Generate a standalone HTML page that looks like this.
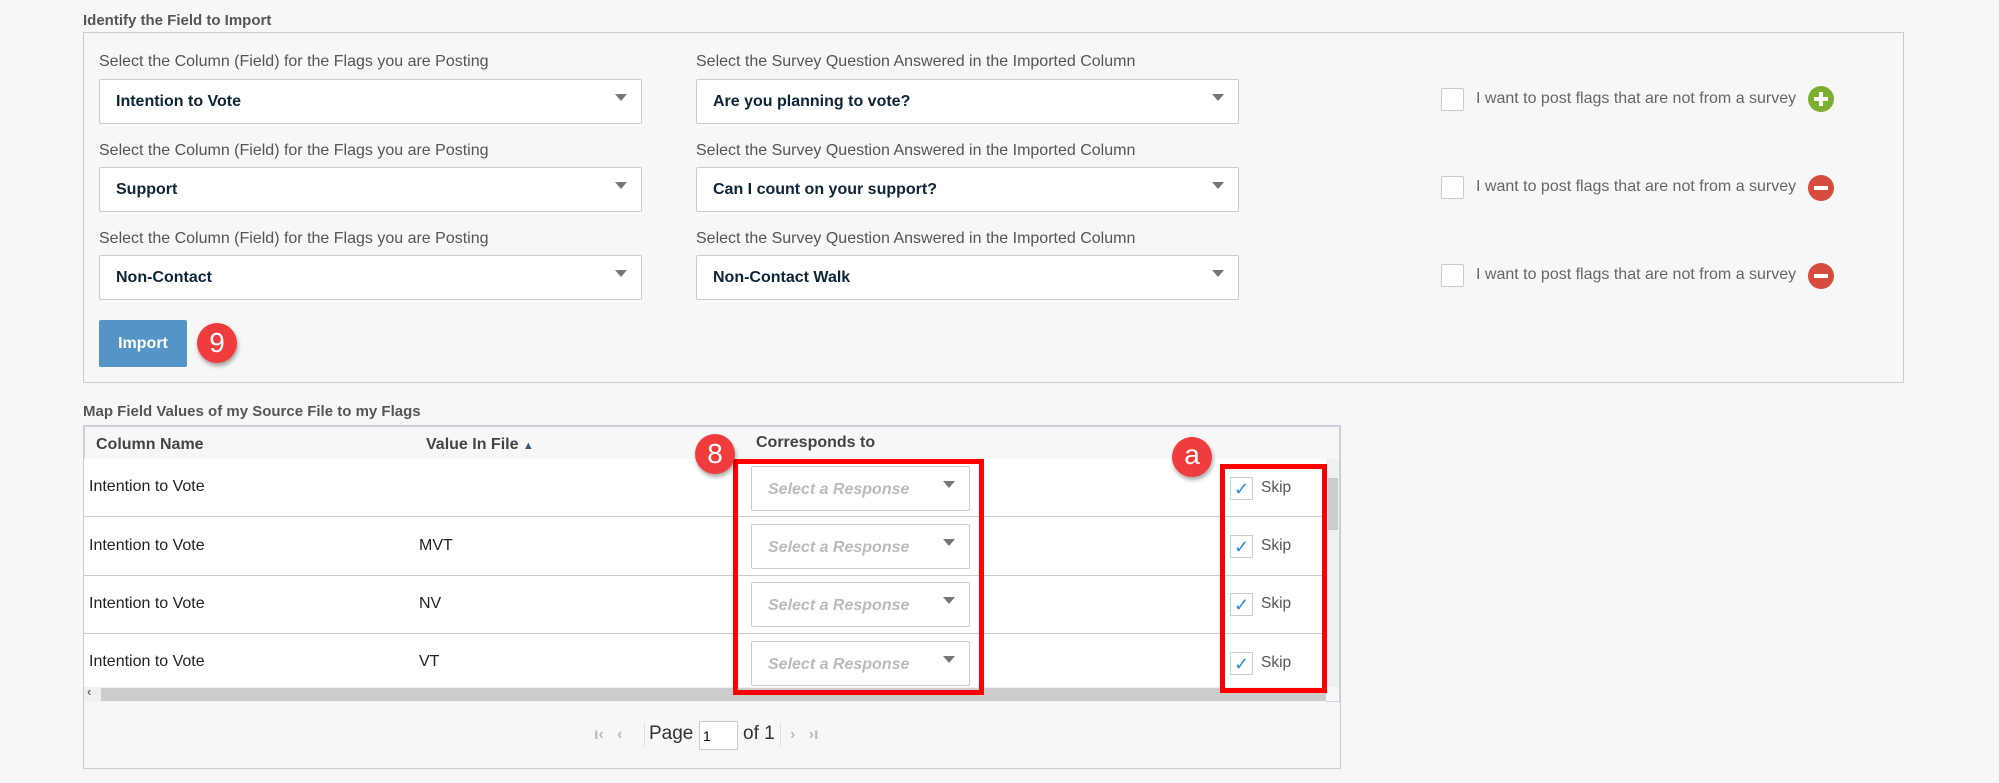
<!DOCTYPE html>
<html><head><meta charset="utf-8"><style>
body{margin:0;width:1999px;height:783px;background:#f7f7f7;font-family:"Liberation Sans",Arial,sans-serif;position:relative;overflow:hidden;color:#333}
.a{position:absolute}
.t{font-weight:bold;font-size:15px;color:#555}
.lbl{font-size:16px;color:#555}
.sel{position:absolute;background:#fff;border:1px solid #ccc;border-radius:2px;box-sizing:border-box;font-weight:bold;font-size:16px;color:#0c2536;padding-left:16px;line-height:44px}
.sel:after{content:"";position:absolute;right:14px;top:14px;border-left:6px solid transparent;border-right:6px solid transparent;border-top:7px solid #777}
.cb{position:absolute;width:23px;height:23px;background:#fff;border:1px solid #ccc;border-radius:2px;box-sizing:border-box}
.nt{font-size:16px;color:#666}
.ic{position:absolute;width:26px;height:26px;border-radius:50%}
.ic:before{content:"";position:absolute;left:6px;top:11px;width:14px;height:4px;background:#fff}
.plus:after{content:"";position:absolute;left:11px;top:6px;width:4px;height:14px;background:#fff}
.badge{position:absolute;width:40px;height:40px;border-radius:50%;background:#f03c3c;color:#fff;font-size:28px;text-align:center;line-height:40px;box-shadow:1px 3px 4px rgba(0,0,0,.35)}
.row{position:absolute;left:84px;width:1242px;background:#fff;border-bottom:1px solid #ccc}
.rt{position:absolute;font-size:16px;color:#222}
.rs{position:absolute;left:751px;width:219px;height:45px;background:#fff;border:1px solid #ccc;border-radius:2px;box-sizing:border-box;font-style:italic;font-weight:bold;color:#bbb;font-size:16px;padding-left:16px;line-height:45px}
.rs:after{content:"";position:absolute;right:14px;top:14px;border-left:6px solid transparent;border-right:6px solid transparent;border-top:7px solid #777}
.sk{position:absolute;left:1230px;width:23px;height:23px;background:#fff;border:1px solid #ccc;box-sizing:border-box;color:#2a8fd8;font-size:18px;text-align:center;line-height:22px}
.skt{position:absolute;left:1261px;font-size:15.5px;color:#555}
</style></head><body>
<div class="a t" style="left:83px;top:12px">Identify the Field to Import</div>
<div class="a" style="left:83px;top:32px;width:1821px;height:351px;border:1px solid #ccc;box-sizing:border-box"></div>

<div class="a lbl" style="left:99px;top:53px">Select the Column (Field) for the Flags you are Posting</div>
<div class="a lbl" style="left:696px;top:53px">Select the Survey Question Answered in the Imported Column</div>
<div class="sel" style="left:99px;top:79px;width:543px;height:45px">Intention to Vote</div>
<div class="sel" style="left:696px;top:79px;width:543px;height:45px">Are you planning to vote?</div>
<div class="cb" style="left:1441px;top:88px"></div><div class="a nt" style="left:1476px;top:90px">I want to post flags that are not from a survey</div>
<div class="ic plus" style="left:1808px;top:86px;background:#7cae2f"></div>

<div class="a lbl" style="left:99px;top:142px">Select the Column (Field) for the Flags you are Posting</div>
<div class="a lbl" style="left:696px;top:142px">Select the Survey Question Answered in the Imported Column</div>
<div class="sel" style="left:99px;top:167px;width:543px;height:45px">Support</div>
<div class="sel" style="left:696px;top:167px;width:543px;height:45px">Can I count on your support?</div>
<div class="cb" style="left:1441px;top:176px"></div><div class="a nt" style="left:1476px;top:178px">I want to post flags that are not from a survey</div>
<div class="ic" style="left:1808px;top:175px;background:#d54d3c"></div>

<div class="a lbl" style="left:99px;top:230px">Select the Column (Field) for the Flags you are Posting</div>
<div class="a lbl" style="left:696px;top:230px">Select the Survey Question Answered in the Imported Column</div>
<div class="sel" style="left:99px;top:255px;width:543px;height:45px">Non-Contact</div>
<div class="sel" style="left:696px;top:255px;width:543px;height:45px">Non-Contact Walk</div>
<div class="cb" style="left:1441px;top:264px"></div><div class="a nt" style="left:1476px;top:266px">I want to post flags that are not from a survey</div>
<div class="ic" style="left:1808px;top:263px;background:#d54d3c"></div>

<div class="a" style="left:99px;top:320px;width:88px;height:47px;background:#5594c6;border-radius:2px;color:#fff;font-weight:bold;font-size:16px;text-align:center;line-height:47px">Import</div>
<div class="badge" style="left:197px;top:323px">9</div>

<div class="a t" style="left:83px;top:403px">Map Field Values of my Source File to my Flags</div>
<div class="a" style="left:83px;top:425px;width:1258px;height:344px;border:1px solid #ccc;box-sizing:border-box;background:#f7f7f7"></div>
<div class="a" style="left:84px;top:426px;width:1256px;height:276px;border:1px solid #c4d6e6;box-sizing:border-box"></div>
<div class="a t" style="left:96px;top:436px;color:#444;font-size:16px">Column Name</div>
<div class="a t" style="left:426px;top:436px;color:#444;font-size:16px">Value In File <span style="font-size:11px;color:#3a5a70">&#9650;</span></div>
<div class="a t" style="left:756px;top:434px;color:#444;font-size:16px">Corresponds to</div>

<div class="row" style="top:459px;height:57px"></div>
<div class="row" style="top:517px;height:58px"></div>
<div class="row" style="top:576px;height:57px"></div>
<div class="row" style="top:634px;height:53px;border:0"></div>

<div class="rt" style="left:89px;top:478px">Intention to Vote</div>
<div class="rt" style="left:89px;top:537px">Intention to Vote</div><div class="rt" style="left:419px;top:537px">MVT</div>
<div class="rt" style="left:89px;top:595px">Intention to Vote</div><div class="rt" style="left:419px;top:595px">NV</div>
<div class="rt" style="left:89px;top:653px">Intention to Vote</div><div class="rt" style="left:419px;top:653px">VT</div>

<div class="rs" style="top:466px">Select a Response</div>
<div class="rs" style="top:524px">Select a Response</div>
<div class="rs" style="top:582px">Select a Response</div>
<div class="rs" style="top:641px">Select a Response</div>

<div class="sk" style="top:477px">&#10003;</div><div class="skt" style="top:479px">Skip</div>
<div class="sk" style="top:535px">&#10003;</div><div class="skt" style="top:537px">Skip</div>
<div class="sk" style="top:593px">&#10003;</div><div class="skt" style="top:595px">Skip</div>
<div class="sk" style="top:652px">&#10003;</div><div class="skt" style="top:654px">Skip</div>

<div class="a" style="left:1326px;top:459px;width:13px;height:228px;background:#f0f0f0"></div>
<div class="a" style="left:1328px;top:478px;width:10px;height:52px;background:#ccc"></div>
<div class="a" style="left:84px;top:687px;width:1242px;height:15px;background:#f0f0f0"></div>
<div class="a" style="left:101px;top:688px;width:1225px;height:13px;background:#ccc"></div>
<div class="a" style="left:87px;top:684px;font-size:13px;color:#444">&#8249;</div>

<div class="a" style="left:733px;top:459px;width:251px;height:236px;border:5px solid #f00;box-sizing:border-box"></div>
<div class="a" style="left:1220px;top:464px;width:107px;height:229px;border:5px solid #f00;box-sizing:border-box"></div>
<div class="badge" style="left:695px;top:434px">8</div>
<div class="badge" style="left:1172px;top:437px;line-height:36px">a</div>

<div class="a" style="left:594px;top:726px;font-size:16px;color:#bbb;font-weight:bold">&#305;&lsaquo; &nbsp; &lsaquo;</div>
<div class="a" style="left:644px;top:723px;width:1px;height:24px;background:#ddd"></div>
<div class="a" style="left:649px;top:723px;font-size:19px;color:#333">Page</div>
<div class="a" style="left:699px;top:721px;width:39px;height:29px;background:#fff;border:1px solid #ccc;box-sizing:border-box;font-size:14px;padding:6px 3px;color:#000">1</div>
<div class="a" style="left:743px;top:723px;font-size:19px;color:#333">of 1</div>
<div class="a" style="left:780px;top:723px;width:1px;height:24px;background:#ddd"></div>
<div class="a" style="left:790px;top:726px;font-size:16px;color:#bbb;font-weight:bold">&rsaquo; &nbsp; &rsaquo;&#305;</div>
</body></html>
